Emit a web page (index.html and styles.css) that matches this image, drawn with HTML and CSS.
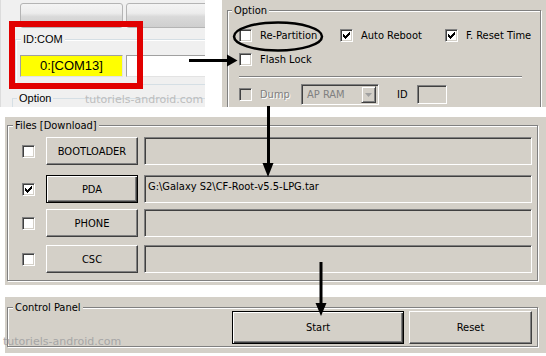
FILE: index.html
```html
<!DOCTYPE html>
<html>
<head>
<meta charset="utf-8">
<title>Odin</title>
<link rel="stylesheet" href="styles.css">
</head>
<body>
<div class="page">
  <div class="top">
    <div class="odin7">
      <div class="tabs"><div class="tab"></div><div class="tab tab-2"></div></div>
      <div class="idcom">
        <div class="idcom-title">ID:COM</div>
        <div class="idcom-row">
          <div class="port port-active">0:[COM13]</div>
          <div class="port"></div>
        </div>
      </div>
      <div class="opt7"><span class="opt7-title">Option</span></div>
      <div class="watermark wm-top">tutoriels-android.com</div>
      <div class="redbox"></div>
    </div>

    <div class="options">
      <fieldset class="group group-opt">
        <legend>Option</legend>
        <div class="opt-body">
          <div class="opt-row">
            <label class="cb w-rp"><span class="chk"></span>Re-Partition</label>
            <label class="cb w-ar"><span class="chk"><svg class="tick" width="7" height="7" viewBox="0 0 7 7"><path d="M0 2h1v1h1v1h1v-1h1v-1h1v-1h1v-1h1v3h-1v1h-1v1h-1v1h-1v1h-1v-1h-1v-1h-1z"/></svg></span>Auto Reboot</label>
            <label class="cb"><span class="chk"><svg class="tick" width="7" height="7" viewBox="0 0 7 7"><path d="M0 2h1v1h1v1h1v-1h1v-1h1v-1h1v-1h1v3h-1v1h-1v1h-1v1h-1v1h-1v-1h-1v-1h-1z"/></svg></span>F. Reset Time</label>
          </div>
          <div class="opt-row opt-row-2">
            <label class="cb"><span class="chk"></span>Flash Lock</label>
          </div>
          <div class="sep"></div>
          <div class="opt-row opt-row-3">
            <label class="cb cb-off w-dump"><span class="chk chk-off"></span>Dump</label>
            <div class="combo"><span>AP RAM</span><span class="combo-btn"><svg width="7" height="4" viewBox="0 0 7 4"><path d="M0 0h7l-3.5 4z"/></svg></span></div>
            <span class="id-label">ID</span>
            <div class="id-box"></div>
          </div>
        </div>
      </fieldset>
    </div>
  </div>

  <div class="panel files">
    <fieldset class="group">
      <legend>Files [Download]</legend>
      <div class="files-body">
        <div class="frow">
          <span class="chk"></span>
          <div class="btn fbtn">BOOTLOADER</div>
          <div class="field"></div>
        </div>
        <div class="frow frow-2">
          <span class="chk"><svg class="tick" width="7" height="7" viewBox="0 0 7 7"><path d="M0 2h1v1h1v1h1v-1h1v-1h1v-1h1v-1h1v3h-1v1h-1v1h-1v1h-1v1h-1v-1h-1v-1h-1z"/></svg></span>
          <div class="btn btn-default fbtn">PDA</div>
          <div class="field">G:\Galaxy S2\CF-Root-v5.5-LPG.tar</div>
        </div>
        <div class="frow frow-3">
          <span class="chk"></span>
          <div class="btn fbtn">PHONE</div>
          <div class="field"></div>
        </div>
        <div class="frow frow-4">
          <span class="chk"></span>
          <div class="btn fbtn">CSC</div>
          <div class="field"></div>
        </div>
      </div>
    </fieldset>
  </div>

  <div class="panel control">
    <fieldset class="group">
      <legend>Control Panel</legend>
      <div class="control-body">
        <div class="btn btn-default cbtn-start">Start</div>
        <div class="btn cbtn-reset">Reset</div>
      </div>
    </fieldset>
  </div>

  <div class="watermark wm-bottom">tutoriels-android.com</div>

  <svg class="annot" width="546" height="356" viewBox="0 0 546 356">
    <ellipse cx="278" cy="36.5" rx="44" ry="14" fill="none" stroke="#000" stroke-width="2.5"/>
    <path d="M189 59h40v3h-40z"/>
    <path d="M227 54.5L237.5 60.5L227 66.5z"/>
    <path d="M267 106h3v58h-3z"/>
    <path d="M262.5 163h11l-5.5 14z"/>
    <path d="M319.5 262h3v42h-3z"/>
    <path d="M315.5 303h11l-5.5 13z"/>
  </svg>
</div>
</body>
</html>
```

FILE: styles.css
```css
* { box-sizing: border-box; }

html, body {
  margin: 0;
  padding: 0;
  background: #fff;
}

body {
  font-family: "DejaVu Sans Condensed", "Liberation Sans", sans-serif;
  font-size: 11px;
  line-height: 13px;
  color: #000;
}

.page {
  position: relative;
  width: 546px;
  height: 356px;
  overflow: hidden;
}

/* ---------- top row ---------- */
.top {
  display: flex;
  height: 107px;
}

.odin7 {
  position: relative;
  width: 205px;
  height: 107px;
  flex-shrink: 0;
  background: #f0f0f0;
  border-left: 1px solid #dcdcdc;
  overflow: hidden;
  font-family: "Liberation Sans", sans-serif;
}

.tabs {
  display: flex;
  gap: 3px;
  padding: 3px 0 0 19px;
}

.tab {
  flex-shrink: 0;
  width: 103px;
  height: 25px;
  border: 1px solid #b4b4b4;
  border-radius: 3px;
  background: linear-gradient(#f4f4f4 0%, #ececec 40%, #d9d9d9 55%, #cfcfcf 100%);
}

.tab-2 { width: 110px; }

.idcom {
  width: 230px;
  margin: 11px 0 0 14px;
  padding: 0 0 7px 4px;
  border: 1px solid #d5dfe5;
  border-right: none;
  box-shadow: inset 1px 1px 0 #fff;
}

.idcom-title {
  display: inline-block;
  margin: -8px 0 0 1px;
  padding: 0 2px;
  line-height: 14px;
  font-size: 11px;
  background: #f0f0f0;
  vertical-align: top;
}

.idcom-row {
  display: flex;
  gap: 3px;
  margin-top: 2px;
}

.port {
  width: 103px;
  height: 22px;
  flex-shrink: 0;
  border: 1px solid #a0a0a0;
  border-right-color: #e3e3e3;
  border-bottom-color: #e3e3e3;
  background: #fff;
}

.port-active {
  background: #ffff00;
  text-align: center;
  font-size: 13px;
  line-height: 20px;
  color: #000;
}

.opt7 {
  width: 220px;
  height: 30px;
  margin: 13px 0 0 11px;
  border-top: 1px solid #d5dfe5;
  border-left: 1px solid #d5dfe5;
}

.opt7-title {
  display: inline-block;
  margin: -8px 0 0 4px;
  padding: 0 2px;
  font-size: 11px;
  line-height: 14px;
  background: #f0f0f0;
  vertical-align: top;
}

.redbox {
  position: absolute;
  left: 8px;
  top: 21px;
  width: 134px;
  height: 68px;
  border: 6px solid #e10000;
}

.watermark {
  position: absolute;
  font-family: "DejaVu Sans", sans-serif;
  font-size: 11px;
  line-height: 13px;
  white-space: nowrap;
}

.wm-top {
  left: 84px;
  top: 93px;
  color: #bdbdbd;
}

.wm-bottom {
  left: 3px;
  top: 335px;
  color: #a6a6a6;
}

/* ---------- options (classic) ---------- */
.options {
  flex: 1;
  margin-left: 17px;
  height: 107px;
  background: #d4d0c8;
  overflow: hidden;
}

.group {
  margin: 0;
  padding: 0;
  min-width: 0;
  border: 1px solid #808080;
  box-shadow: inset 1px 1px 0 #fff, 1px 1px 0 #fff;
}

.group legend {
  padding: 0 2px;
  margin-left: 5px;
  line-height: 13px;
  background: #d4d0c8;
}

.group-opt {
  width: 314px;
  height: 130px;
  margin: 4px 0 0 5px;
}

.group-opt legend { margin-left: 4px; }

.opt-body {
  padding: 12px 0 0 11px;
}

.opt-row {
  display: flex;
  align-items: center;
  height: 13px;
}

.opt-row-2 { margin-top: 11px; }

.opt-row-3 {
  margin-top: 6px;
  height: 21px;
}

.sep {
  width: 283px;
  height: 2px;
  margin-top: 10px;
  border-top: 1px solid #808080;
  border-bottom: 1px solid #fff;
}

.cb {
  display: flex;
  align-items: center;
  gap: 8px;
  flex-shrink: 0;
  white-space: nowrap;
}

.w-rp { width: 101px; }
.w-ar { width: 105px; }
.w-dump { width: 62px; }

.cb-off {
  color: #808080;
  text-shadow: 1px 1px 0 #fff;
}

.chk {
  display: block;
  flex-shrink: 0;
  width: 13px;
  height: 13px;
  border: 1px solid;
  border-color: #808080 #fff #fff #808080;
  box-shadow: inset 1px 1px 0 #404040, inset -1px -1px 0 #d4d0c8;
  background: #fff;
}

.chk-off { background: #d4d0c8; }

.tick {
  display: block;
  margin: 2px 0 0 2px;
  fill: #000;
}

.combo {
  display: flex;
  align-items: center;
  width: 78px;
  height: 21px;
  padding: 0 2px 0 5px;
  border: 1px solid;
  border-color: #808080 #fff #fff #808080;
  box-shadow: inset 1px 1px 0 #404040, inset -1px -1px 0 #d4d0c8;
  color: #808080;
}

.combo-btn {
  display: flex;
  align-items: center;
  justify-content: center;
  margin-left: auto;
  width: 15px;
  height: 17px;
  border: 1px solid;
  border-color: #d4d0c8 #404040 #404040 #d4d0c8;
  box-shadow: inset 1px 1px 0 #fff, inset -1px -1px 0 #808080;
}

.combo-btn svg { fill: #a0a0a0; }

.id-label { margin-left: 18px; }

.id-box {
  width: 30px;
  height: 19px;
  margin-left: 9px;
  border: 1px solid;
  border-color: #808080 #fff #fff #808080;
  box-shadow: inset 1px 1px 0 #404040, inset -1px -1px 0 #d4d0c8;
}

/* ---------- classic panels ---------- */
.panel {
  width: 541px;
  margin-left: 5px;
  background: #d4d0c8;
  padding: 2px 8px 0 2px;
}

.files {
  margin-top: 10px;
  height: 168px;
}

.files-body {
  padding: 5px 5px 7px 14px;
}

.frow {
  display: flex;
  align-items: center;
  height: 28px;
}

.frow-2 { margin-top: 10px; }
.frow-3 { margin-top: 6px; }
.frow-4 { margin-top: 8px; }

.frow .chk { margin-right: 11px; }

.btn {
  display: flex;
  align-items: center;
  justify-content: center;
  flex-shrink: 0;
  border: 1px solid;
  border-color: #fff #404040 #404040 #fff;
  box-shadow: inset -1px -1px 0 #808080;
  background: #d4d0c8;
}

.btn-default {
  border-color: #000;
  box-shadow: inset 1px 1px 0 #fff, inset -1px -1px 0 #404040, inset -2px -2px 0 #808080;
}

.fbtn {
  width: 92px;
  height: 28px;
  margin-right: 6px;
}

.field {
  flex: 1;
  height: 28px;
  padding: 4px 3px 0 3px;
  border: 1px solid;
  border-color: #808080 #fff #fff #808080;
  box-shadow: inset 1px 1px 0 #404040, inset -1px -1px 0 #d4d0c8;
  white-space: nowrap;
  overflow: hidden;
}

.control {
  margin-top: 12px;
  height: 56px;
  padding-top: 4px;
}

.control-body {
  display: flex;
  gap: 5px;
  margin-top: -3px;
  padding: 0 0 2px 224px;
}

.cbtn-start {
  width: 172px;
  height: 33px;
}

.cbtn-reset {
  width: 123px;
  height: 33px;
}

/* ---------- annotations ---------- */
.annot {
  position: absolute;
  left: 0;
  top: 0;
  pointer-events: none;
  fill: #000;
}
```
